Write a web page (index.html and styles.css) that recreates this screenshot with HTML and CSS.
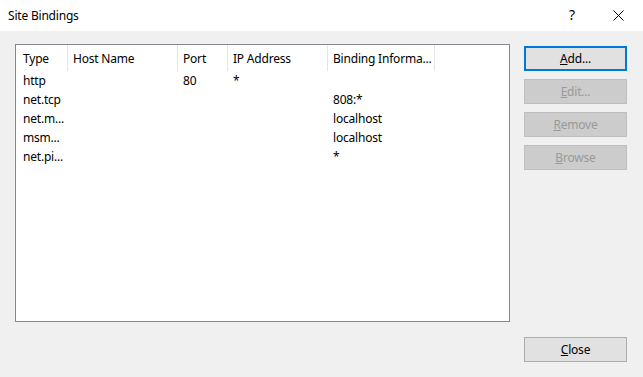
FILE: index.html
```html
<!DOCTYPE html>
<html>
<head>
<meta charset="utf-8">
<link rel="stylesheet" href="styles.css">
</head>
<body>
<div class="window">
  <div class="titlebar">
    <span class="title">Site Bindings</span>
    <span class="help">?</span>
    <span class="close-x">
      <svg width="11" height="11" viewBox="0 0 11 11"><path d="M0.5 0.5 L10.5 10.5 M10.5 0.5 L0.5 10.5" stroke="#000" stroke-width="1" fill="none"/></svg>
    </span>
  </div>
  <div class="content">
    <div class="listbox">
      <div class="row header">
        <div class="cell c-type">Type</div>
        <div class="cell c-host">Host Name</div>
        <div class="cell c-port">Port</div>
        <div class="cell c-ip">IP Address</div>
        <div class="cell c-bind">Binding Informa...</div>
      </div>
      <div class="row">
        <div class="cell c-type">http</div>
        <div class="cell c-host"></div>
        <div class="cell c-port">80</div>
        <div class="cell c-ip">*</div>
        <div class="cell c-bind"></div>
      </div>
      <div class="row">
        <div class="cell c-type">net.tcp</div>
        <div class="cell c-host"></div>
        <div class="cell c-port"></div>
        <div class="cell c-ip"></div>
        <div class="cell c-bind">808:*</div>
      </div>
      <div class="row">
        <div class="cell c-type">net.m...</div>
        <div class="cell c-host"></div>
        <div class="cell c-port"></div>
        <div class="cell c-ip"></div>
        <div class="cell c-bind">localhost</div>
      </div>
      <div class="row">
        <div class="cell c-type">msm...</div>
        <div class="cell c-host"></div>
        <div class="cell c-port"></div>
        <div class="cell c-ip"></div>
        <div class="cell c-bind">localhost</div>
      </div>
      <div class="row">
        <div class="cell c-type">net.pi...</div>
        <div class="cell c-host"></div>
        <div class="cell c-port"></div>
        <div class="cell c-ip"></div>
        <div class="cell c-bind">*</div>
      </div>
    </div>
    <div class="buttons">
      <button class="btn default"><u>A</u>dd...</button>
      <button class="btn disabled"><u>E</u>dit...</button>
      <button class="btn disabled"><u>R</u>emove</button>
      <button class="btn disabled"><u>B</u>rowse</button>
      <button class="btn close"><u>C</u>lose</button>
    </div>
  </div>
</div>
</body>
</html>
```
FILE: styles.css
```css
* { box-sizing: border-box; }
html, body {
  margin: 0;
  padding: 0;
}
body {
  width: 643px;
  height: 377px;
  overflow: hidden;
  font-family: "Noto Sans", "Open Sans", sans-serif;
  font-size: 12px;
  letter-spacing: -0.2px;
  color: #000;
}
.window {
  width: 643px;
  height: 377px;
  display: flex;
  flex-direction: column;
  background: #f0f0f0;
}
.titlebar {
  height: 31px;
  background: #fff;
  display: flex;
  align-items: center;
  padding-left: 8px;
  flex-shrink: 0;
}
.title {
  flex: 1;
  padding-bottom: 1px;
}
.help {
  width: 12px;
  text-align: center;
  font-size: 14px;
  margin-right: 35px;
  padding-bottom: 2px;
}
.close-x {
  width: 11px;
  height: 11px;
  margin-right: 19px;
  display: flex;
  margin-bottom: 1px;
}
.content {
  flex: 1;
  display: flex;
  padding: 13px 16px 15px 15px;
  gap: 14px;
}
.listbox {
  width: 495px;
  height: 278px;
  background: #fff;
  border: 1px solid #828790;
  flex-shrink: 0;
}
.row {
  display: flex;
  height: 19px;
  align-items: center;
  line-height: 19px;
  white-space: nowrap;
}
.row.header {
  height: 26px;
  line-height: 26px;
}
.cell {
  padding-left: 5px;
  overflow: hidden;
  height: 100%;
}
.header .cell {
  border-right: 1px solid #e5e5e5;
  padding-top: 1px;
}
.c-type { width: 52px; padding-left: 7px; }
.c-host { width: 110px; }
.c-port { width: 50px; }
.c-ip { width: 100px; }
.c-bind { width: 107px; }
.buttons {
  flex: 1;
  display: flex;
  flex-direction: column;
  gap: 8px;
  padding-top: 2px;
}
.btn {
  height: 25px;
  width: 103px;
  font-family: inherit;
  font-size: 12px;
  letter-spacing: -0.2px;
  padding: 0;
  margin: 0;
  border: 1px solid #adadad;
  background: #e1e1e1;
  color: #000;
  line-height: 21px;
}
.btn.default {
  border: 2px solid #0078d7;
}
.btn.disabled {
  background: #cccccc;
  border-color: #bfbfbf;
  color: #9a9a9a;
}
.btn.close {
  margin-top: auto;
}
```
